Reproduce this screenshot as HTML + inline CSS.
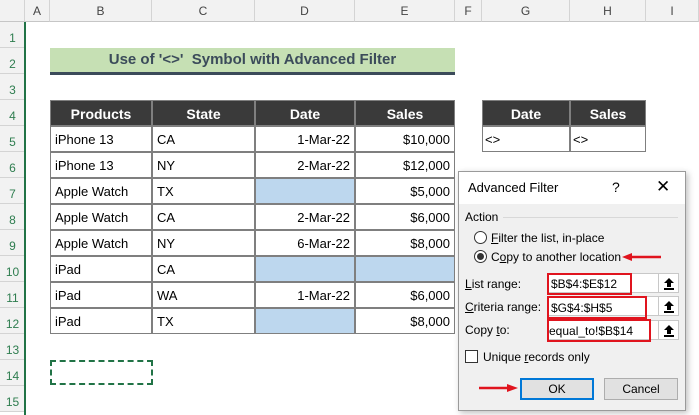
<!DOCTYPE html>
<html><head><style>
*{margin:0;padding:0;box-sizing:border-box}
body{width:699px;height:415px;overflow:hidden;background:#fff;font-family:"Liberation Sans",sans-serif;position:relative}
.a{position:absolute}
.ch{position:absolute;top:0;height:22px;line-height:22px;text-align:center;font-size:12px;color:#444;background:#f2f2f2;border-right:1px solid #d4d4d4;border-bottom:1px solid #c6c6c6}
.rh{position:absolute;left:0;width:25px;height:26px;text-align:center;font-size:12px;color:#2e7d4f;background:#f2f2f2;border-bottom:1px solid #d4d4d4;padding-top:8px;line-height:16px}
.c{position:absolute;height:26px;line-height:26px;font-size:13px;border:1px solid #7f7f7f;margin:-1px 0 0 -1px;padding:0 4px;white-space:nowrap;color:#000}
.h{background:#3a3a3a;color:#fff;font-weight:bold;text-align:center;font-size:14px}
.r{text-align:right}
.b{background:#bdd7ee}
.d{font-size:12px;color:#000;position:absolute;white-space:nowrap}
u{text-decoration:underline}
.up{position:absolute;left:658px;width:21px;height:20px;background:#fff;border:1px solid #c8c8c8}
.up svg{position:absolute;left:5px;top:4px}
</style></head><body>
<div class="ch" style="left:0;width:25px"></div>
<div class="ch" style="left:25px;width:25px">A</div>
<div class="ch" style="left:50px;width:102px">B</div>
<div class="ch" style="left:152px;width:103px">C</div>
<div class="ch" style="left:255px;width:100px">D</div>
<div class="ch" style="left:355px;width:100px">E</div>
<div class="ch" style="left:455px;width:27px">F</div>
<div class="ch" style="left:482px;width:88px">G</div>
<div class="ch" style="left:570px;width:76px">H</div>
<div class="ch" style="left:646px;width:53px">I</div>
<div class="rh" style="top:22px">1</div><div class="rh" style="top:48px">2</div><div class="rh" style="top:74px">3</div><div class="rh" style="top:100px">4</div><div class="rh" style="top:126px">5</div><div class="rh" style="top:152px">6</div><div class="rh" style="top:178px">7</div><div class="rh" style="top:204px">8</div><div class="rh" style="top:230px">9</div><div class="rh" style="top:256px">10</div><div class="rh" style="top:282px">11</div><div class="rh" style="top:308px">12</div><div class="rh" style="top:334px">13</div><div class="rh" style="top:360px">14</div><div class="rh" style="top:386px">15</div>
<div class="a" style="left:24px;top:22px;width:2px;height:393px;background:#217346"></div>
<div class="a" style="left:50px;top:48px;width:405px;height:24px;background:#c6e0b4;text-align:center;line-height:24px;font-weight:bold;font-size:15px;color:#3b4b5a">Use of '&lt;&gt;'&nbsp; Symbol with Advanced Filter</div>
<div class="a" style="left:50px;top:72px;width:405px;height:3px;background:#3b4b5a"></div>

<div class="c h" style="left:51px;top:101px;width:102px">Products</div>
<div class="c h" style="left:153px;top:101px;width:103px">State</div>
<div class="c h" style="left:256px;top:101px;width:100px">Date</div>
<div class="c h" style="left:356px;top:101px;width:100px">Sales</div>

<div class="c" style="left:51px;top:127px;width:102px">iPhone 13</div><div class="c" style="left:153px;top:127px;width:103px">CA</div><div class="c r" style="left:256px;top:127px;width:100px">1-Mar-22</div><div class="c r" style="left:356px;top:127px;width:100px">$10,000</div>
<div class="c" style="left:51px;top:153px;width:102px">iPhone 13</div><div class="c" style="left:153px;top:153px;width:103px">NY</div><div class="c r" style="left:256px;top:153px;width:100px">2-Mar-22</div><div class="c r" style="left:356px;top:153px;width:100px">$12,000</div>
<div class="c" style="left:51px;top:179px;width:102px">Apple Watch</div><div class="c" style="left:153px;top:179px;width:103px">TX</div><div class="c b" style="left:256px;top:179px;width:100px"></div><div class="c r" style="left:356px;top:179px;width:100px">$5,000</div>
<div class="c" style="left:51px;top:205px;width:102px">Apple Watch</div><div class="c" style="left:153px;top:205px;width:103px">CA</div><div class="c r" style="left:256px;top:205px;width:100px">2-Mar-22</div><div class="c r" style="left:356px;top:205px;width:100px">$6,000</div>
<div class="c" style="left:51px;top:231px;width:102px">Apple Watch</div><div class="c" style="left:153px;top:231px;width:103px">NY</div><div class="c r" style="left:256px;top:231px;width:100px">6-Mar-22</div><div class="c r" style="left:356px;top:231px;width:100px">$8,000</div>
<div class="c" style="left:51px;top:257px;width:102px">iPad</div><div class="c" style="left:153px;top:257px;width:103px">CA</div><div class="c b" style="left:256px;top:257px;width:100px"></div><div class="c b" style="left:356px;top:257px;width:100px"></div>
<div class="c" style="left:51px;top:283px;width:102px">iPad</div><div class="c" style="left:153px;top:283px;width:103px">WA</div><div class="c r" style="left:256px;top:283px;width:100px">1-Mar-22</div><div class="c r" style="left:356px;top:283px;width:100px">$6,000</div>
<div class="c" style="left:51px;top:309px;width:102px">iPad</div><div class="c" style="left:153px;top:309px;width:103px">TX</div><div class="c b" style="left:256px;top:309px;width:100px"></div><div class="c r" style="left:356px;top:309px;width:100px">$8,000</div>

<div class="c h" style="left:483px;top:101px;width:88px">Date</div>
<div class="c h" style="left:571px;top:101px;width:76px">Sales</div>
<div class="c" style="left:483px;top:127px;width:88px;padding-left:2px">&lt;&gt;</div>
<div class="c" style="left:571px;top:127px;width:76px;padding-left:2px">&lt;&gt;</div>

<div class="a" style="left:50px;top:360px;width:103px;height:25px;border:2px dashed #217346"></div>

<div class="a" style="left:458px;top:171px;width:228px;height:240px;background:#f0f0f0;border:1px solid #9a9a9a;box-shadow:2px 2px 6px rgba(0,0,0,.25)"></div>
<div class="a" style="left:459px;top:172px;width:226px;height:32px;background:#fff"></div>
<div class="d" style="left:468px;top:180px;font-size:13px">Advanced Filter</div>
<div class="d" style="left:612px;top:179px;font-size:14px">?</div>
<div class="d" style="left:656px;top:177px;font-size:17px">✕</div>
<div class="d" style="left:465px;top:210px">Action</div>
<div class="a" style="left:503px;top:217px;width:175px;height:1px;background:#d8d8d8"></div>
<div class="a" style="left:474px;top:231px;width:13px;height:13px;border:1px solid #333;border-radius:50%;background:#fff"></div>
<div class="d" style="left:491px;top:231px"><u>F</u>ilter the list, in-place</div>
<div class="a" style="left:474px;top:250px;width:13px;height:13px;border:1px solid #333;border-radius:50%;background:#fff"></div>
<div class="a" style="left:477px;top:253px;width:7px;height:7px;border-radius:50%;background:#333"></div>
<div class="d" style="left:491px;top:250px">C<u>o</u>py to another location</div>
<svg class="a" style="left:622px;top:252px" width="40" height="10"><line x1="8" y1="5" x2="39" y2="5" stroke="#e0141e" stroke-width="2.5"/><polygon points="0,5 10,1 10,9" fill="#e0141e"/></svg>
<div class="d" style="left:465px;top:277px"><u>L</u>ist range:</div>
<div class="d" style="left:465px;top:300px"><u>C</u>riteria range:</div>
<div class="d" style="left:465px;top:323px">Copy <u>t</u>o:</div>
<div class="a" style="left:547px;top:273px;width:132px;height:20px;background:#fff;border:1px solid #c8c8c8"></div>
<div class="a" style="left:547px;top:296px;width:132px;height:20px;background:#fff;border:1px solid #c8c8c8"></div>
<div class="a" style="left:547px;top:320px;width:132px;height:20px;background:#fff;border:1px solid #c8c8c8"></div>
<div class="up" style="top:273px"><svg width="10" height="12"><path d="M5 0 L10 5 L7 5 L7 9 L3 9 L3 5 L0 5 Z" fill="#000"/><rect x="0" y="10" width="10" height="2" fill="#000"/></svg></div>
<div class="up" style="top:296px"><svg width="10" height="12"><path d="M5 0 L10 5 L7 5 L7 9 L3 9 L3 5 L0 5 Z" fill="#000"/><rect x="0" y="10" width="10" height="2" fill="#000"/></svg></div>
<div class="up" style="top:320px"><svg width="10" height="12"><path d="M5 0 L10 5 L7 5 L7 9 L3 9 L3 5 L0 5 Z" fill="#000"/><rect x="0" y="10" width="10" height="2" fill="#000"/></svg></div>
<div class="a" style="left:547px;top:273px;width:85px;height:22px;border:2.5px solid #e0141e"></div>
<div class="a" style="left:547px;top:296px;width:100px;height:23px;border:2.5px solid #e0141e"></div>
<div class="a" style="left:547px;top:319px;width:104px;height:23px;border:2.5px solid #e0141e"></div>
<div class="d" style="left:551px;top:277px">$B$4:$E$12</div>
<div class="d" style="left:551px;top:301px">$G$4:$H$5</div>
<div class="d" style="left:549px;top:324px">equal_to!$B$14</div>
<div class="a" style="left:465px;top:350px;width:13px;height:13px;border:1px solid #333;background:#fff"></div>
<div class="d" style="left:483px;top:350px">Unique <u>r</u>ecords only</div>
<div class="a" style="left:520px;top:378px;width:74px;height:22px;background:#e1e1e1;border:2px solid #0078d7;text-align:center;line-height:18px;font-size:12px">OK</div>
<div class="a" style="left:604px;top:378px;width:74px;height:22px;background:#e1e1e1;border:1px solid #adadad;text-align:center;line-height:20px;font-size:12px">Cancel</div>
<svg class="a" style="left:479px;top:383px" width="40" height="10"><line x1="0" y1="5" x2="30" y2="5" stroke="#e0141e" stroke-width="2.5"/><polygon points="39,5 28,1 28,9" fill="#e0141e"/></svg>
</body></html>
